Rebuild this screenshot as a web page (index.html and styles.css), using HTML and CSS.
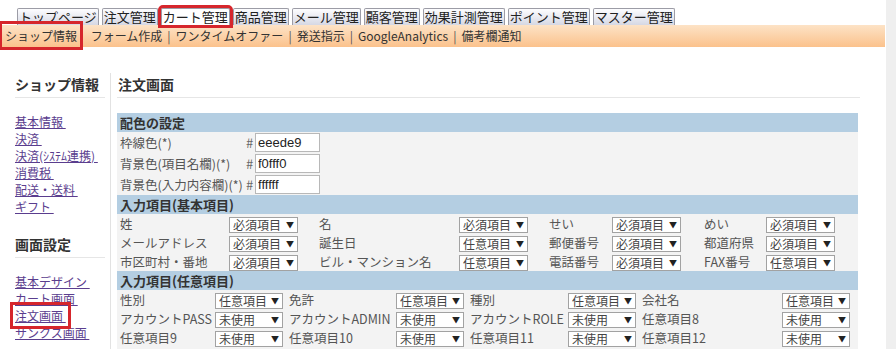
FILE: index.html
```html
<!DOCTYPE html>
<html>
<head>
  <title>注文画面</title>
  <link rel="stylesheet" href="styles.css">
</head>
<body>
<div class="page">
  <div class="tabs">
    <span class="tab">トップページ</span>
    <span class="tab">注文管理</span>
    <span class="tab active mark">カート管理</span>
    <span class="tab">商品管理</span>
    <span class="tab">メール管理</span>
    <span class="tab">顧客管理</span>
    <span class="tab">効果計測管理</span>
    <span class="tab">ポイント管理</span>
    <span class="tab">マスター管理</span>
  </div>

  <div class="subnav">
    <span class="current mark">ショップ情報</span>
    <span class="subnav-links">フォーム作成<span class="sep">|</span>ワンタイムオファー<span class="sep">|</span>発送指示<span class="sep">|</span>GoogleAnalytics<span class="sep">|</span>備考欄通知</span>
  </div>

  <div class="content">
    <div class="side">
      <h3 class="side-title">ショップ情報</h3>
      <ul class="side-menu">
        <li><a href="#">基本情報&nbsp;</a></li>
        <li><a href="#">決済&nbsp;</a></li>
        <li><a href="#">決済(ｼｽﾃﾑ連携)&nbsp;</a></li>
        <li><a href="#">消費税&nbsp;</a></li>
        <li><a href="#">配送・送料&nbsp;</a></li>
        <li><a href="#">ギフト&nbsp;</a></li>
      </ul>
      <h3 class="side-title">画面設定</h3>
      <ul class="side-menu">
        <li><a href="#">基本デザイン&nbsp;</a></li>
        <li><a href="#">カート画面&nbsp;</a></li>
        <li><a href="#" class="mark-link">注文画面&nbsp;</a></li>
        <li><a href="#">サンクス画面&nbsp;</a></li>
      </ul>
    </div>

    <div class="main">
      <h2 class="main-title">注文画面</h2>

      <div class="sec-head">配色の設定</div>
      <div class="grid colors">
        <div class="cell">枠線色(*)</div><div class="hash">#</div><div><input class="color-input" type="text" value="eeede9"></div>
        <div class="cell">背景色(項目名欄)(*)</div><div class="hash">#</div><div><input class="color-input" type="text" value="f0fff0"></div>
        <div class="cell">背景色(入力内容欄)(*)</div><div class="hash">#</div><div><input class="color-input" type="text" value="ffffff"></div>
      </div>

      <div class="sec-head">入力項目(基本項目)</div>
      <div class="grid basic">
        <div class="cell">姓</div><div class="cell"><span class="dd"><select><option>必須項目</option></select></span></div>
        <div class="cell">名</div><div class="cell"><span class="dd"><select><option>必須項目</option></select></span></div>
        <div class="cell">せい</div><div class="cell"><span class="dd"><select><option>必須項目</option></select></span></div>
        <div class="cell">めい</div><div class="cell"><span class="dd"><select><option>必須項目</option></select></span></div>

        <div class="cell">メールアドレス</div><div class="cell"><span class="dd"><select><option>必須項目</option></select></span></div>
        <div class="cell">誕生日</div><div class="cell"><span class="dd"><select><option>任意項目</option></select></span></div>
        <div class="cell">郵便番号</div><div class="cell"><span class="dd"><select><option>必須項目</option></select></span></div>
        <div class="cell">都道府県</div><div class="cell"><span class="dd"><select><option>必須項目</option></select></span></div>

        <div class="cell">市区町村・番地</div><div class="cell"><span class="dd"><select><option>必須項目</option></select></span></div>
        <div class="cell">ビル・マンション名</div><div class="cell"><span class="dd"><select><option>任意項目</option></select></span></div>
        <div class="cell">電話番号</div><div class="cell"><span class="dd"><select><option>必須項目</option></select></span></div>
        <div class="cell">FAX番号</div><div class="cell"><span class="dd"><select><option>任意項目</option></select></span></div>
      </div>

      <div class="sec-head">入力項目(任意項目)</div>
      <div class="grid optional">
        <div class="cell">性別</div><div class="cell"><span class="dd"><select><option>任意項目</option></select></span></div>
        <div class="cell">免許</div><div class="cell"><span class="dd"><select><option>任意項目</option></select></span></div>
        <div class="cell">種別</div><div class="cell"><span class="dd"><select><option>任意項目</option></select></span></div>
        <div class="cell">会社名</div><div class="cell"><span class="dd"><select><option>任意項目</option></select></span></div>

        <div class="cell">アカウントPASS</div><div class="cell"><span class="dd"><select><option>未使用</option></select></span></div>
        <div class="cell">アカウントADMIN</div><div class="cell"><span class="dd"><select><option>未使用</option></select></span></div>
        <div class="cell">アカウントROLE</div><div class="cell"><span class="dd"><select><option>未使用</option></select></span></div>
        <div class="cell">任意項目8</div><div class="cell"><span class="dd"><select><option>未使用</option></select></span></div>

        <div class="cell">任意項目9</div><div class="cell"><span class="dd"><select><option>未使用</option></select></span></div>
        <div class="cell">任意項目10</div><div class="cell"><span class="dd"><select><option>未使用</option></select></span></div>
        <div class="cell">任意項目11</div><div class="cell"><span class="dd"><select><option>未使用</option></select></span></div>
        <div class="cell">任意項目12</div><div class="cell"><span class="dd"><select><option>未使用</option></select></span></div>

        <div class="cell"></div><div class="cell"><span class="dd"><select><option></option></select></span></div>
        <div class="cell"></div><div class="cell"><span class="dd"><select><option></option></select></span></div>
        <div class="cell"></div><div class="cell"><span class="dd"><select><option></option></select></span></div>
        <div class="cell"></div><div class="cell"><span class="dd"><select><option></option></select></span></div>
      </div>
    </div>
  </div>
</div>
</body>
</html>
```

FILE: styles.css
```css
html {
  background-color: #efefef;
}

body {
  margin: 0;
  font-family: "Noto Sans CJK JP", sans-serif;
  font-size: 13px;
  color: #555;
}

.page {
  width: 886px;
  height: 349px;
  background-color: #fff;
  overflow: hidden;
}

/* タブ */
.tabs {
  display: flex;
  gap: 3px;
  padding: 8px 0 0 17px;
  height: 17px;
}

.tab {
  height: 16px;
  line-height: 16px;
  padding: 0 1px;
  border: 1px solid #9c9ca6;
  border-bottom: none;
  border-radius: 2px 2px 0 0;
  background: linear-gradient(#fdfdff, #d6d8e4);
  color: #222;
  white-space: nowrap;
}

.tab.active {
  background: #fff;
}

.mark {
  outline: 3px solid #d6262c;
}

/* サブメニュー */
.subnav {
  width: 885px;
  height: 22px;
  line-height: 22px;
  padding-left: 5px;
  box-sizing: border-box;
  background: linear-gradient(#fde3c6, #fbc28c);
  color: #333;
  font-size: 12px;
  white-space: nowrap;
}

.subnav .current {
  outline-offset: 3px;
}

.subnav-links {
  margin-left: 11px;
}

.sep {
  margin: 0 5px;
  color: #555;
}

/* 本体 */
.content {
  display: flex;
  padding-top: 26px;
}

.side {
  width: 95px;
  padding: 1px 0 0 15px;
  border-right: 1px solid #e2e2e2;
  height: 300px;
}

.side-title {
  margin: 0;
  width: 90px;
  font-size: 14px;
  line-height: 20px;
  padding-bottom: 3px;
  border-bottom: 1px solid #e6e6e6;
  color: #333;
}

.side-menu {
  list-style: none;
  margin: 15px 0 19px;
  padding: 0;
  font-size: 12px;
  line-height: 17px;
}

.side-menu a {
  color: #5a3d8e;
}

.mark-link {
  outline: 3px solid #d6262c;
  outline-offset: 2px;
}

.main {
  width: 743px;
  margin-left: 6px;
  padding-top: 1px;
}

.main-title {
  margin: 0 0 15px;
  padding: 0 0 3px 1px;
  font-size: 14px;
  line-height: 20px;
  border-bottom: 1px solid #e6e6e6;
  color: #333;
}

.sec-head {
  width: 741px;
  height: 19px;
  line-height: 19px;
  padding-left: 3px;
  box-sizing: border-box;
  background-color: #b4cee2;
  font-weight: bold;
  color: #333;
}

.grid {
  display: grid;
  width: 741px;
  background-color: #f3f3f3;
  align-items: center;
}

.cell {
  padding-left: 3px;
  white-space: nowrap;
  line-height: 19px;
  font-size: 12.5px;
}

.colors {
  grid-template-columns: 129px 9px 1fr;
  grid-auto-rows: 21px;
}

.hash {
  color: #666;
}

.color-input {
  display: block;
  width: 65px;
  height: 19px;
  box-sizing: border-box;
  border: 1px solid #b8b8b8;
  padding: 0 2px;
  font-family: "Liberation Sans", sans-serif;
  font-size: 13px;
  color: #222;
}

.basic {
  grid-template-columns: 109px 90px 140px 90px 63px 92px 62px 95px;
  grid-auto-rows: 19px;
}

.optional {
  grid-template-columns: 95px 74px 107px 74px 98px 74px 140px 79px;
  grid-auto-rows: 19px;
}

.dd {
  position: relative;
  display: inline-block;
  vertical-align: middle;
}

.dd::after {
  content: "▼";
  position: absolute;
  right: 4px;
  top: 0;
  font-size: 8px;
  line-height: 16px;
  color: #222;
  pointer-events: none;
}

.dd select {
  appearance: none;
  -webkit-appearance: none;
  display: block;
  width: 69px;
  height: 16px;
  padding: 0 0 0 3px;
  border: 1px solid #a2a2a2;
  border-radius: 0;
  background-color: #fff;
  font-family: "Noto Sans CJK JP", sans-serif;
  font-size: 12px;
  line-height: 14px;
  color: #444;
}

.optional .dd select {
  width: 68px;
}
```
